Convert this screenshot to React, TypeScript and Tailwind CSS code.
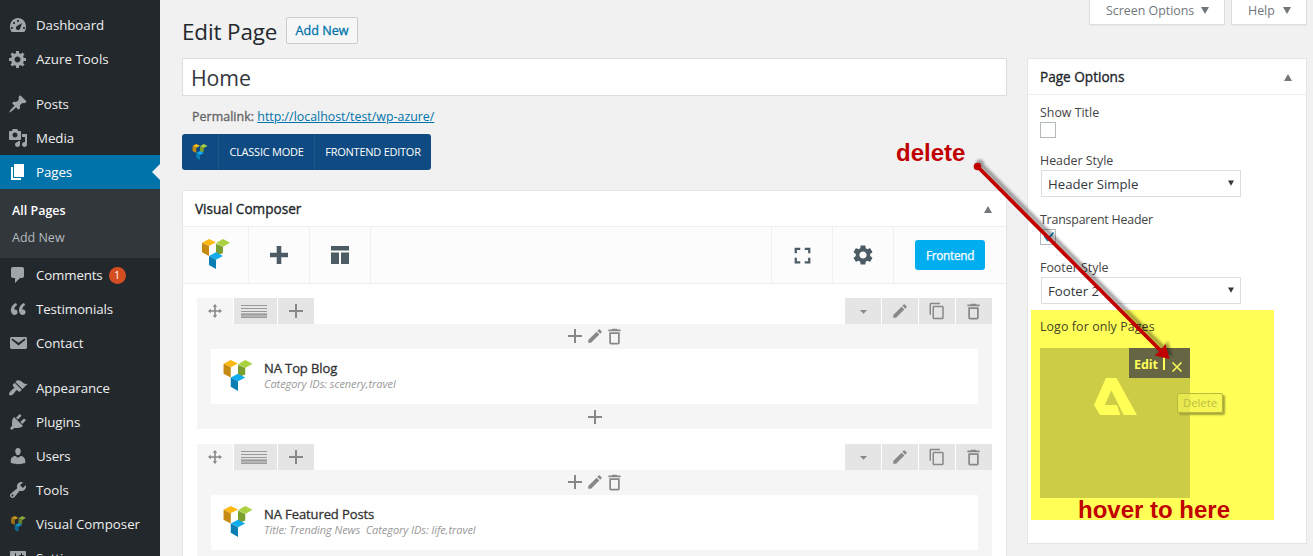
import React from 'react';
import { MdAdd, MdContentCopy, MdDeleteOutline, MdEdit, MdFullscreen, MdSettings, MdArrowDropDown } from 'react-icons/md';

const icons = {
  dashboard:
    'M3.76 17h12.48c1.09-1.37 1.76-3.09 1.76-5C18 6.58 14.42 3 10 3S2 6.58 2 12c0 1.91.66 3.63 1.76 5zM9 6c0-.55.45-1 1-1s1 .45 1 1-.45 1-1 1-1-.45-1-1zM5 8c0-.55.45-1 1-1s1 .45 1 1-.45 1-1 1-1-.45-1-1zM8.52 11.4c.84-.83 5.51-3.5 5.51-3.5s-1.66 5.68-2.49 6.51c-.84.84-2.18.84-3.02 0-.83-.83-.83-2.18 0-3.01zM3 13c0-.55.45-1 1-1s1 .45 1 1-.45 1-1 1-1-.45-1-1zM15 13c0-.55.45-1 1-1s1 .45 1 1-.45 1-1 1-1-.45-1-1z',
  generic:
    'M18 12h-2.18c-.17.7-.44 1.35-.81 1.93l1.54 1.54-2.1 2.1-1.54-1.54c-.58.36-1.23.63-1.91.79V19H8v-2.18c-.68-.16-1.33-.43-1.91-.79l-1.54 1.54-2.12-2.12 1.54-1.54c-.36-.58-.63-1.23-.79-1.91H1V9.03h2.17c.16-.7.44-1.35.8-1.94L2.43 5.55l2.1-2.1 1.54 1.54c.58-.37 1.24-.64 1.93-.81V2h3v2.18c.68.16 1.33.43 1.91.79l1.54-1.54 2.12 2.12-1.54 1.54c.36.59.64 1.24.8 1.94H18V12zm-8.5 1.5c1.66 0 3-1.34 3-3s-1.34-3-3-3-3 1.34-3 3 1.34 3 3 3z',
  post:
    'M10.44 3.02l1.82-1.82 6.36 6.35-1.83 1.82c-1.05-.68-2.48-.57-3.41.36l-.75.75c-.92.93-1.04 2.35-.35 3.41l-1.83 1.82-2.41-2.41-2.8 2.79c-.42.42-3.38 2.71-3.8 2.29s1.86-3.39 2.28-3.81l2.79-2.79L4.1 9.36l1.83-1.82c1.05.69 2.48.57 3.4-.36l.75-.75c.93-.92 1.05-2.35.36-3.41z',
  media:
    'M13 11V4c0-.55-.45-1-1-1h-1.67L9 1H5L3.67 3H2c-.55 0-1 .45-1 1v7c0 .55.45 1 1 1h10c.55 0 1-.45 1-1zM7 4.5c1.38 0 2.5 1.12 2.5 2.5S8.38 9.5 7 9.5 4.5 8.38 4.5 7 5.62 4.5 7 4.5zM14 6h5v10.5c0 1.38-1.12 2.5-2.5 2.5S14 17.88 14 16.5s1.12-2.5 2.5-2.5c.17 0 .34.02.5.05V9h-3V6zm-4 8.05V13h2v3.5c0 1.38-1.12 2.5-2.5 2.5S7 17.88 7 16.5 8.12 14 9.5 14c.17 0 .34.02.5.05z',
  page: 'M6 15V2h10v13H6zm-1 1h8v2H3V5h2v11z',
  comments: 'M5 2h9c1.1 0 2 .9 2 2v7c0 1.1-.9 2-2 2h-2l-5 5v-5H5c-1.1 0-2-.9-2-2V4c0-1.1.9-2 2-2z',
  quote:
    'M9.49 13.22c0-.74-.2-1.38-.61-1.9-.62-.78-1.83-.88-2.53-.72-.29-1.65 1.11-3.75 2.92-4.65L7.88 4c-2.73 1.3-5.42 4.28-4.96 8.05C3.21 14.43 4.59 16 6.54 16c.85 0 1.56-.25 2.12-.75s.83-1.18.83-2.03zm8.05 0c0-.74-.2-1.38-.61-1.9-.63-.78-1.83-.88-2.53-.72-.29-1.65 1.11-3.75 2.92-4.65L15.93 4c-2.73 1.3-5.41 4.28-4.95 8.05.29 2.38 1.66 3.95 3.61 3.95.85 0 1.56-.25 2.12-.75s.83-1.18.83-2.03z',
  email:
    'M3.87 4h13.25C18.37 4 19 4.59 19 5.79v8.42c0 1.19-.63 1.79-1.88 1.79H3.87c-1.25 0-1.88-.6-1.88-1.79V5.79c0-1.2.63-1.79 1.88-1.79zm6.62 8.6l6.74-5.53c.24-.2.43-.66.13-1.07-.29-.41-.82-.42-1.17-.17l-5.7 3.86L4.8 5.83c-.35-.25-.88-.24-1.17.17-.3.41-.11.87.13 1.07z',
  appearance:
    'M14.48 11.06L7.41 3.99l1.5-1.5c.5-.56 2.3-.47 3.51.32 1.21.8 1.43 1.28 2.91 2.1 1.18.64 2.45 1.26 4.45.85zm-.71.71L6.7 4.7 4.93 6.47c-.39.39-.39 1.02 0 1.41l1.06 1.06c.39.39.39 1.03 0 1.42-.6.6-1.43 1.11-2.21 1.69-.35.26-.7.53-1.01.84C1.43 14.23.4 16.08 1.4 17.07c.99 1 2.84-.03 4.18-1.36.31-.31.58-.66.85-1.02.57-.78 1.08-1.61 1.69-2.21.39-.39 1.02-.39 1.41 0l1.06 1.06c.39.39 1.02.39 1.41 0z',
  plugins:
    'M13.11 4.36L9.87 7.6 8 5.73l3.24-3.24c.35-.34 1.05-.2 1.56.32.52.51.66 1.21.31 1.55zm-8 1.77l.91-1.12 9.01 9.01-1.19.84c-.71.71-2.63 1.16-3.82 1.16H6.14L4.9 17.26c-.59.59-1.54.59-2.12 0-.59-.58-.59-1.53 0-2.12l1.24-1.24v-3.88c0-1.13.4-3.19 1.09-3.89zm7.26 3.97l3.24-3.24c.34-.35 1.04-.21 1.55.31.52.51.66 1.21.31 1.55l-3.24 3.25z',
  users:
    'M10 9.25c-2.27 0-2.73-3.44-2.73-3.44C7 4.02 7.82 2 9.97 2c2.16 0 2.98 2.02 2.71 3.81 0 0-.41 3.44-2.68 3.44zm0 2.57L12.72 10c2.39 0 4.52 2.33 4.52 4.53v2.49s-3.65 1.13-7.24 1.13c-3.65 0-7.24-1.13-7.24-1.13v-2.49c0-2.25 1.94-4.48 4.47-4.48z',
  tools:
    'M16.68 9.77c-1.34 1.34-3.3 1.67-4.95.99l-5.41 6.52c-.99.99-2.59.99-3.58 0s-.99-2.59 0-3.57l6.52-5.42c-.68-1.65-.35-3.61.99-4.95 1.28-1.28 3.12-1.62 4.72-1.06l-2.89 2.89 2.82 2.82 2.86-2.87c.53 1.58.18 3.39-1.08 4.65zM3.81 16.21c.4.39 1.04.39 1.43 0 .4-.4.4-1.04 0-1.43-.39-.4-1.03-.4-1.43 0-.39.39-.39 1.03 0 1.43z',
  settings:
    'M18 16V4c0-.55-.45-1-1-1H3c-.55 0-1 .45-1 1v12c0 .55.45 1 1 1h14c.55 0 1-.45 1-1zM8 11h1c.55 0 1 .45 1 1s-.45 1-1 1H8v1.5c0 .28-.22.5-.5.5s-.5-.22-.5-.5V13H6c-.55 0-1-.45-1-1s.45-1 1-1h1V5.5c0-.28.22-.5.5-.5s.5.22.5.5V11zm5-2h-1c-.55 0-1-.45-1-1s.45-1 1-1h1V5.5c0-.28.22-.5.5-.5s.5.22.5.5V7h1c.55 0 1 .45 1 1s-.45 1-1 1h-1v5.5c0 .28-.22.5-.5.5s-.5-.22-.5-.5V9z',
};

function ComposerLogo({ className }: { className: string }) {
  return (
    <svg viewBox="0 0 84 90" className={className}>
      <path d="M0 11 21 0l21 10-21 11z" fill="#fdb913" />
      <path d="M0 11 21 21v30L0 40z" fill="#c58a12" />
      <path d="M42 12 63 0l21 11-21 12z" fill="#aad13f" />
      <path d="M42 14 63 23v19L42 51z" fill="#7a9f2c" />
      <path d="M21 51 42 40l21 11-21 11z" fill="#10adee" />
      <path d="M21 51 42 62v28L21 78z" fill="#0b7fb3" />
    </svg>
  );
}

type NavItemProps = { icon?: keyof typeof icons; label: string; active?: boolean; badge?: string; spacing?: string };

function NavItem({ icon, label, active, badge, spacing = 'tracking-[-0.06px]' }: NavItemProps) {
  return (
    <li className={`relative flex h-[34px] shrink-0 items-center ${active ? 'bg-[#0073aa]' : ''}`}>
      <span className="flex w-9 justify-center">
        {icon ? (
          <svg viewBox="0 0 20 20" className={`size-5 ${active ? 'fill-white' : 'fill-[#a0a5aa]'}`}>
            <path fillRule="evenodd" d={icons[icon]} />
          </svg>
        ) : (
          <ComposerLogo className="h-4 w-[15px] opacity-75" />
        )}
      </span>
      <span className={`text-[13.3px] leading-[18px] ${spacing} ${active ? 'text-white' : 'text-[#eee]'}`}>{label}</span>
      {badge && (
        <span className="ml-[6px] flex size-[17px] items-center justify-center rounded-full bg-[#d54e21] text-[10px] text-white">{badge}</span>
      )}
      {active && <span className="absolute right-0 border-y-8 border-r-8 border-y-transparent border-r-[#f1f1f1]" />}
    </li>
  );
}

function Sidebar() {
  return (
    <nav className="h-full w-40 shrink-0 overflow-hidden bg-[#23282d] pt-2">
      <ul className="flex flex-col">
        <NavItem icon="dashboard" label="Dashboard" />
        <NavItem icon="generic" label="Azure Tools" spacing="tracking-[0.05px]" />
        <li className="h-[11px]" />
        <NavItem icon="post" label="Posts" spacing="tracking-[-0.15px]" />
        <NavItem icon="media" label="Media" />
        <NavItem icon="page" label="Pages" active />
        <li className="flex h-[69px] flex-col bg-[#32373c] pt-2 pl-3 text-[12.5px]">
          <span className="h-[27px] leading-[27px] font-semibold text-white">All Pages</span>
          <span className="h-[27px] leading-[27px] text-[#b4b9be]">Add New</span>
        </li>
        <NavItem icon="comments" label="Comments" badge="1" spacing="tracking-[-0.15px]" />
        <NavItem icon="quote" label="Testimonials" spacing="tracking-[-0.1px]" />
        <NavItem icon="email" label="Contact" />
        <li className="h-[11px]" />
        <NavItem icon="appearance" label="Appearance" spacing="tracking-[-0.05px]" />
        <NavItem icon="plugins" label="Plugins" />
        <NavItem icon="users" label="Users" spacing="tracking-[-0.2px]" />
        <NavItem icon="tools" label="Tools" />
        <NavItem label="Visual Composer" spacing="tracking-[0px]" />
        <NavItem icon="settings" label="Settings" />
      </ul>
    </nav>
  );
}

function MoveIcon() {
  return (
    <svg viewBox="0 0 14 14" className="size-[14px] fill-[#898989]">
      <path d="M7 0l2.3 2.8H7.8v3.4h3.4V4.7L14 7l-2.8 2.3V7.8H7.8v3.4h1.5L7 14l-2.3-2.8h1.5V7.8H2.8v1.5L0 7l2.8-2.3v1.5h3.4V2.8H4.7z" />
    </svg>
  );
}

function Row({ title, details }: { title: string; details: string }) {
  const tab = 'flex h-[26px] w-9 items-center justify-center bg-[#e5e5e5]';
  return (
    <section className="text-[#888]">
      <div className="flex justify-between">
        <div className="flex">
          <span className="mr-px flex h-[26px] w-9 items-center justify-center bg-[#f5f5f5]">
            <MoveIcon />
          </span>
          <span className="mr-px flex h-[26px] w-[43px] items-center justify-center bg-[#e5e5e5] pr-[3px]">
            <svg viewBox="0 0 26 13" className="h-[13px] w-[26px]">
              <path d="M0 0h26v1H0zM0 3h26v1H0zM0 6h26v1H0z" fill="#999" />
              <path d="M0 8h26v5H0z" fill="#b4b4b4" />
              <path d="M0 9h26v1H0zM0 12h26v1H0z" fill="#9c9c9c" />
            </svg>
          </span>
          <span className={`${tab} pb-px`}>
            <MdAdd className="size-6" />
          </span>
        </div>
        <div className="flex gap-px">
          <span className={tab}><MdArrowDropDown className="size-[17px]" /></span>
          <span className={tab}><MdEdit className="size-[18px]" /></span>
          <span className={tab}><MdContentCopy className="size-[18px]" /></span>
          <span className={`${tab} pr-px`}><MdDeleteOutline className="size-[21px]" /></span>
        </div>
      </div>
      <div className="h-[105px] bg-[#f5f5f5] px-[14px]">
        <div className="flex h-[25px] items-center justify-center pb-px">
          <MdAdd className="-mr-px size-6" />
          <MdEdit className="size-[18px]" />
          <MdDeleteOutline className="mr-[2px] size-[21px]" />
        </div>
        <div className="flex h-[55px] items-start bg-white pt-[11px] pl-3">
          <ComposerLogo className="h-[31px] w-[30px]" />
          <div className="pl-[11px]">
            <h3 className="h-[17px] text-[13px] leading-[17px] font-normal tracking-[-0.1px] whitespace-nowrap text-[#333] [-webkit-text-stroke:0.3px]">{title}</h3>
            <p className="text-[11px] leading-[14px] tracking-[-0.06px] whitespace-pre text-[#999] italic">{details}</p>
          </div>
        </div>
        <div className="flex h-[25px] items-center justify-center">
          <MdAdd className="size-6" />
        </div>
      </div>
    </section>
  );
}

function Triangle({ className }: { className: string }) {
  return (
    <svg viewBox="0 0 8 7" className={className}>
      <path d="M0 0h8L4 7z" />
    </svg>
  );
}

function PanelHeader({ title }: { title: string }) {
  return (
    <header className="flex h-9 items-center justify-between border-b border-[#eee] pr-[14px] pl-3">
      <h2 className="pt-[2px] text-[13.6px] font-normal tracking-[0px] text-[#23282d] [-webkit-text-stroke:0.35px]">{title}</h2>
      <Triangle className="mt-[2px] h-[7px] w-2 rotate-180 fill-[#72777c]" />
    </header>
  );
}

function Composer() {
  const cell = 'flex h-[56px] w-[61px] items-center justify-center';
  return (
    <section className="h-[400px] border border-[#e5e5e5] bg-white">
      <PanelHeader title="Visual Composer" />
      <div className="flex h-[57px] justify-between border-b border-[#eee] bg-[#fcfcfc] text-[#4d5b65]">
        <div className="flex">
          <span className="flex w-[66px] items-center justify-center border-r border-[#f0f0f0] pb-[2px]">
            <ComposerLogo className="h-[30px] w-7" />
          </span>
          <span className={`${cell} border-r border-[#f0f0f0] pb-px`}>
            <svg viewBox="0 0 18 18" className="size-[18px] fill-current"><path d="M6.7 0h4.6v6.7H18v4.6h-6.7V18H6.7v-6.7H0V6.7h6.7z" /></svg>
          </span>
          <span className={`${cell} border-r border-[#f0f0f0]`}>
            <svg viewBox="0 0 18 18" className="size-[18px] fill-current"><path d="M0 0h18v4.6H0zM0 6.4h8V18H0zM10 6.4h8V18h-8z" /></svg>
          </span>
        </div>
        <div className="flex">
          <span className={`${cell} border-l border-[#f0f0f0]`}><MdFullscreen className="size-[27px]" /></span>
          <span className={`${cell} border-l border-[#f0f0f0] pb-px`}><MdSettings className="size-6" /></span>
          <span className="flex w-[113px] items-center justify-center border-l border-[#f0f0f0]">
            <button className="h-[30px] w-[70px] rounded-[3px] bg-[#00aef0] pt-[2px] text-[11.8px] tracking-[-0.3px] text-white [-webkit-text-stroke:0.25px]">Frontend</button>
          </span>
        </div>
      </div>
      <div className="flex flex-col gap-[15px] px-[14px] pt-[14px]">
        <Row title="NA Top Blog" details="Category IDs: scenery,travel" />
        <Row title="NA Featured Posts" details={'Title: Trending News  Category IDs: life,travel'} />
      </div>
    </section>
  );
}

function Label({ children }: { children: React.ReactNode }) {
  return <div className="h-[18px] pt-px text-[12.4px] leading-[18px] text-[#444]">{children}</div>;
}

function Select({ value }: { value: string }) {
  return (
    <div className="ml-px flex h-[27px] w-[200px] items-center justify-between border border-[#ddd] pr-[6px] pl-[6px] text-[13.2px] text-[#32373c]">
      <span className="pt-[2px]">{value}</span>
      <Triangle className="mb-[2px] h-[6px] w-[6px] fill-[#32373c]" />
    </div>
  );
}

function PageOptions() {
  return (
    <aside className="h-[486px] w-[280px] shrink-0 border border-[#e5e5e5] bg-white">
      <PanelHeader title="Page Options" />
      <div className="pt-2 pl-3">
        <Label>Show Title</Label>
        <div className="mt-px mb-[13px] size-4 border border-[#b4b9be]" />
        <Label>Header Style</Label>
        <div className="mt-px mb-[13px]"><Select value="Header Simple" /></div>
        <Label><span className="tracking-[-0.2px]">Transparent Header</span></Label>
        <div className="mt-px mb-[13px] flex size-4 items-center justify-center border border-[#b4b9be]">
          <svg viewBox="0 0 20 20" className="size-5 shrink-0 fill-[#1e8cbe]"><path d="M14.83 4.89l1.34.94-5.81 8.38H9.02L5.78 9.67l1.34-1.25 2.57 2.4z" /></svg>
        </div>
        <Label>Footer Style</Label>
        <div className="mt-px mb-[6px]"><Select value="Footer 2" /></div>
      </div>
      <div className="relative ml-[3px] h-[210px] w-[243px] bg-[#ffff57] pt-2 pl-[9px]">
        <div className="h-[30px] text-[12.4px] leading-[18px] tracking-[0.1px] text-[#444423]">Logo for only Pages</div>
        <div className="relative size-[150px] bg-[#cccc46]">
          <div className="ml-auto flex h-[30px] w-[61px] bg-[#666644] pl-[5px] text-[12.6px] leading-[33px] font-bold tracking-[-0.15px] text-[#ffff57]">
            Edit
            <span className="mt-[9px] ml-[5px] h-[13px] w-[2px] bg-[#ffff57]" />
            <svg viewBox="0 0 10 10" className="mt-[14px] ml-[7px] size-[10px] stroke-[#ffff57] stroke-[1.5]"><path d="M.5.5l9 9M9.500.5l-9 9" /></svg>
          </div>
          <svg viewBox="0 0 130 112" className="absolute top-[30px] left-[54px] h-[37px] w-[43px] fill-[#ffff57]">
            <path d="M36 0h32l62 112H90L52 37 33 82h36l11 30H18L0 82z" />
          </svg>
        </div>
        <span className="absolute top-[83px] left-[146px] flex h-5 w-[46px] items-center justify-center rounded-[2px] border border-[#b9b93e] bg-[#f2f252]/70 text-[11.3px] text-[#bcbc45] shadow-[2px_2px_2px_#a5a538]">Delete</span>
        <span className="absolute top-[186px] left-[47px] font-['Liberation_Sans',Arial,sans-serif] text-[24px] leading-[28px] font-bold whitespace-nowrap text-[#c00000]">hover to here</span>
      </div>
    </aside>
  );
}

export default function App() {
  return (
    <div className="relative flex h-[556px] w-[1313px] overflow-hidden bg-[#f1f1f1] font-['Open_Sans','Noto_Sans',sans-serif]">
      <Sidebar />
      <div className="flex grow flex-col pr-[6px] pl-[22px]">
        <div className="flex h-[58px] shrink-0 justify-between">
          <div className="flex items-start pt-[17px]">
            <h1 className="w-24 text-[22.4px] leading-[29px] tracking-[-0.1px] text-[#23282d]">Edit Page</h1>
            <button className="ml-2 h-[27px] w-[72px] rounded-[2px] border border-[#ccc] bg-[#f7f7f7] pt-[2px] text-[12.6px] text-[#0073aa] [-webkit-text-stroke:0.3px]">Add New</button>
          </div>
          <div className="flex gap-[6px] text-[12.4px] text-[#72777c]">
            <span className="flex h-[25px] w-[136px] items-center border border-t-0 border-[#ddd] bg-white pb-[2px] pl-4 shadow-[0_1px_1px_-1px_rgba(0,0,0,.2)]">
              Screen Options <Triangle className="mb-px ml-[7px] h-[7px] w-2 fill-[#72777c]" />
            </span>
            <span className="flex h-[25px] w-[76px] items-center border border-t-0 border-[#ddd] bg-white pb-[2px] pl-4 shadow-[0_1px_1px_-1px_rgba(0,0,0,.2)]">
              Help <Triangle className="mb-px ml-[8px] h-[7px] w-2 fill-[#72777c]" />
            </span>
          </div>
        </div>
        <div className="flex items-start gap-5">
          <main className="flex w-[825px] shrink-0 flex-col">
            <div className="h-[38px] border border-[#ddd] bg-white pl-2 text-[21.3px] leading-[38px] tracking-[-0.1px] text-[#32373c]">Home</div>
            <div className="h-[38px] pt-3 pl-[10px] text-[12.4px] leading-[18px]">
              <span className="tracking-[0.06px] text-[#666] [-webkit-text-stroke:0.35px]">Permalink:</span>{' '}
              <span className="text-[#0073aa] underline">http://localhost/test/wp-azure/</span>
            </div>
            <div className="flex h-9 w-[249px] rounded-[3px] bg-[#0f4b82] text-[11px] leading-9 tracking-[-0.25px] text-white">
              <span className="flex w-[37px] items-center justify-center border-r border-[#1c588e]"><ComposerLogo className="h-4 w-4" /></span>
              <span className="w-24 border-r border-[#1c588e] text-center">CLASSIC MODE</span>
              <span className="grow text-center">FRONTEND EDITOR</span>
            </div>
            <div className="pt-5"><Composer /></div>
          </main>
          <PageOptions />
        </div>
      </div>
      <span className="absolute top-[139px] left-[896px] font-['Liberation_Sans',Arial,sans-serif] text-[24px] leading-[28px] font-bold text-[#c00000]">delete</span>
      <svg viewBox="970 150 210 220" className="absolute top-[150px] left-[970px] h-[220px] w-[210px]">
        <defs>
          <filter id="soft" x="-10%" y="-10%" width="120%" height="120%"><feGaussianBlur stdDeviation="1.6" /></filter>
        </defs>
        <g opacity="0.4" filter="url(#soft)" transform="translate(2.500 -3)">
          <path d="M977.500 166.500 1161 351" stroke="#000" strokeWidth="4" />
          <circle cx="977.500" cy="166.500" r="3.800" />
          <path d="M1169.500 359 1154.500 355.500 1160.500 350.500 1165.500 344z" />
        </g>
        <g fill="#c00000">
          <path d="M977.500 166.500 1162 352" stroke="#c00000" strokeWidth="3.800" />
          <circle cx="977.500" cy="166.500" r="3.800" />
          <path d="M1169.500 359 1154.500 355.500 1160.500 350.500 1165.500 344z" />
        </g>
      </svg>
    </div>
  );
}
